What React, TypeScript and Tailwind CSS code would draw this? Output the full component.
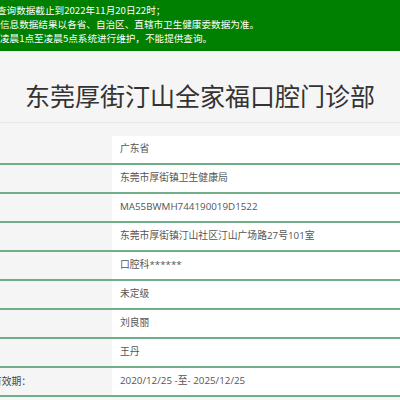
const rows = [
  { label: "省份：", value: "广东省" },
  { label: "登记机关：", value: "东莞市厚街镇卫生健康局" },
  { label: "登记号：", value: "MA55BWMH744190019D1522" },
  { label: "地址：", value: "东莞市厚街镇汀山社区汀山广场路27号101室" },
  { label: "诊疗科目：", value: "口腔科******" },
  { label: "级别：", value: "未定级" },
  { label: "法人：", value: "刘良丽" },
  { label: "负责人：", value: "王丹" },
  { label: "执业许可证有效期：", value: "2020/12/25 -至- 2025/12/25" },
];

export default function App() {
  return (
    <div
      className="w-[400px] h-[400px] overflow-hidden bg-[#f5f5f5]"
      style={{ fontFamily: '"Noto Sans CJK SC", "Noto Sans", sans-serif' }}
    >
      {/* notice banner */}
      <div className="h-[51px] bg-[#008000] text-white text-[9.6px] leading-[14px] pt-[3px] whitespace-nowrap">
        <div className="-ml-[3px]">查询数据截止到2022年11月20日22时；</div>
        <div>信息数据结果以各省、自治区、直辖市卫生健康委数据为准。</div>
        <div>凌晨1点至凌晨5点系统进行维护，不能提供查询。</div>
      </div>

      <div className="h-[72px] border-b border-[#e8e8e8] flex items-end justify-center pb-[9px]">
        <h1 className="text-[25px] leading-[36px] text-[#333] whitespace-nowrap">东莞厚街汀山全家福口腔门诊部</h1>
      </div>

      <div className="mt-[13px] text-[9.8px]">
        {rows.map((row) => (
          <div key={row.label} className="flex h-[29px] border-b-2 border-[#6fae87]">
            <div className="w-[112px] shrink-0 flex items-center whitespace-nowrap text-[#444]">
              <span className="-ml-[57px]">{row.label}</span>
            </div>
            <div
              className="flex-1 bg-white pl-2 flex items-center whitespace-nowrap text-[#555]"
              style={{ fontFamily: '"Open Sans", "Noto Sans CJK SC", sans-serif' }}
            >
              {row.value}
            </div>
          </div>
        ))}
      </div>
    </div>
  );
}
